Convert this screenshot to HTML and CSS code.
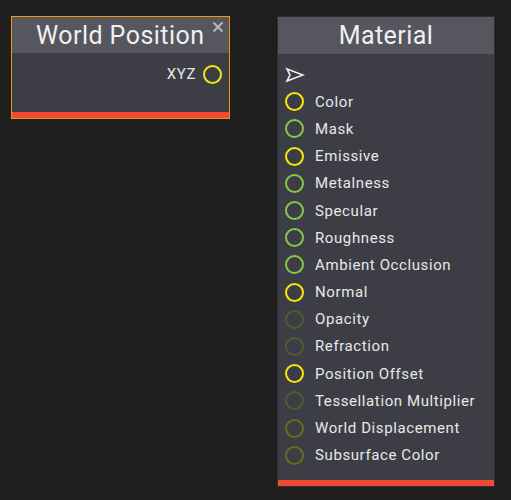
FILE: index.html
```html
<!DOCTYPE html>
<html>
<head>
<meta charset="utf-8">
<link rel="stylesheet" href="styles.css">
</head>
<body>
<div class="canvas">
  <div class="node node-wp">
    <div class="head head-wp">
      <span class="title">World Position</span>
      <svg class="close" width="12" height="12" viewBox="0 0 12 12"><path d="M1.5 1.5 L10.5 10.5 M10.5 1.5 L1.5 10.5" stroke="#b4b5ba" stroke-width="2.2"/></svg>
    </div>
    <div class="body-wp">
      <div class="out-row">
        <span class="label">XYZ</span>
        <span class="pin pin-yellow"></span>
      </div>
    </div>
    <div class="redbar"></div>
  </div>

  <div class="node node-mat">
    <div class="head head-mat">
      <span class="title">Material</span>
    </div>
    <div class="body-mat">
      <div class="row">
        <svg class="arrow" width="20" height="16" viewBox="0 0 20 16"><path d="M2 2 L18 8 L2 14 L5 8 Z" fill="none" stroke="#f2f2f2" stroke-width="1.6" stroke-linejoin="miter"/></svg>
      </div>
      <div class="row"><span class="pin pin-yellow"></span><span class="label">Color</span></div>
      <div class="row"><span class="pin pin-green"></span><span class="label">Mask</span></div>
      <div class="row"><span class="pin pin-yellow"></span><span class="label">Emissive</span></div>
      <div class="row"><span class="pin pin-green"></span><span class="label">Metalness</span></div>
      <div class="row"><span class="pin pin-green"></span><span class="label">Specular</span></div>
      <div class="row"><span class="pin pin-green"></span><span class="label">Roughness</span></div>
      <div class="row"><span class="pin pin-green"></span><span class="label">Ambient Occlusion</span></div>
      <div class="row"><span class="pin pin-yellow"></span><span class="label">Normal</span></div>
      <div class="row"><span class="pin pin-dimgreen"></span><span class="label">Opacity</span></div>
      <div class="row"><span class="pin pin-dimgreen"></span><span class="label">Refraction</span></div>
      <div class="row"><span class="pin pin-yellow"></span><span class="label">Position Offset</span></div>
      <div class="row"><span class="pin pin-dimgreen"></span><span class="label">Tessellation Multiplier</span></div>
      <div class="row"><span class="pin pin-olive"></span><span class="label">World Displacement</span></div>
      <div class="row"><span class="pin pin-olive"></span><span class="label">Subsurface Color</span></div>
    </div>
    <div class="redbar"></div>
  </div>
</div>
</body>
</html>
```

FILE: styles.css
```css
html, body {
  margin: 0;
  padding: 0;
  background: #1e1e1f;
  height: 100%;
}
body {
  font-family: Roboto, "Noto Sans", sans-serif;
  color: #e6e6e6;
}
.canvas {
  display: flex;
  align-items: flex-start;
  gap: 47px;
  padding: 16px 0 0 11px;
}
.node {
  display: flex;
  flex-direction: column;
  background: #3d3e45;
}
.node-wp {
  width: 217px;
  border: 1px solid #f0960f;
}
.node-mat {
  width: 216px;
  border: 1px solid #2c2d31;
}
.head {
  background: #55565e;
  display: flex;
  align-items: center;
  position: relative;
}
.head-wp {
  height: 36px;
  padding-left: 24px;
}
.head-mat {
  height: 37px;
  justify-content: center;
}
.title {
  font-size: 25px;
  letter-spacing: 0.45px;
  color: #f0f0f0;
  line-height: 1;
}
.close {
  position: absolute;
  right: 5px;
  top: 4px;
}
.body-wp {
  height: 59px;
}
.out-row {
  display: flex;
  justify-content: flex-end;
  align-items: center;
  gap: 7px;
  height: 42px;
  padding-right: 7px;
}
.label {
  font-size: 15px;
  letter-spacing: 0.6px;
  color: #e8e8e8;
}
.pin {
  box-sizing: border-box;
  width: 19px;
  height: 19px;
  border-radius: 50%;
  border: 2.3px solid;
  flex: none;
}
.pin-yellow { border-color: #f5e90a; }
.pin-green { border-color: #86c550; }
.pin-dimgreen { border-color: #4d5d31; }
.pin-olive { border-color: #6d6a1f; }
.body-mat {
  display: flex;
  flex-direction: column;
  padding: 7px 0 11px 7px;
}
.row {
  height: 27.2px;
  display: flex;
  align-items: center;
  gap: 11px;
}
.redbar {
  height: 6px;
  background: #ee4a36;
}
```
